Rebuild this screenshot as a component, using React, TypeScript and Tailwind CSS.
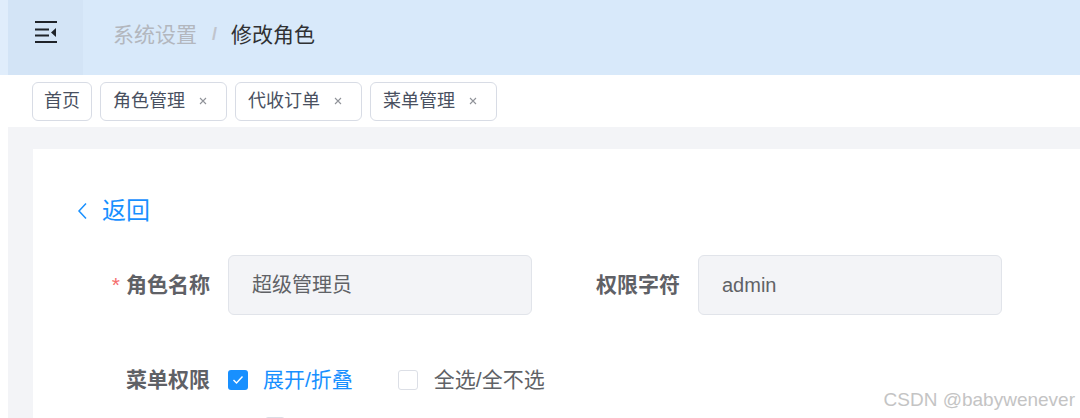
import React from "react";

const Close = () => (
  <svg width="8" height="8" viewBox="0 0 8 8" className="ml-[14px] shrink-0">
    <path d="M1 1L7 7M7 1L1 7" stroke="#909399" strokeWidth="1.1" />
  </svg>
);

const Tag = ({ label, closable = true }: { label: string; closable?: boolean }) => (
  <div
    className={`h-[39px] flex items-center border border-[#d8dce5] rounded-[6px] bg-white text-[18px] text-[#495060] ${
      closable ? "pl-[12px] pr-[19px]" : "px-[11px]"
    }`}
  >
    <span className="leading-none">{label}</span>
    {closable && <Close />}
  </div>
);

const Checkbox = ({ checked }: { checked?: boolean }) =>
  checked ? (
    <div className="w-[20px] h-[20px] rounded-[3px] bg-[#1890ff] flex items-center justify-center shrink-0">
      <svg width="12" height="10" viewBox="0 0 12 10">
        <path d="M1.5 5L4.5 8L10.5 1.5" stroke="white" strokeWidth="1.4" fill="none" />
      </svg>
    </div>
  ) : (
    <div className="w-[20px] h-[20px] rounded-[3px] bg-white border border-[#dcdfe6] shrink-0" />
  );

export default function App() {
  return (
    <div className="w-[1080px] h-[418px] overflow-hidden flex relative bg-white font-['Liberation_Sans','Noto_Sans_CJK_SC',sans-serif]">
      {/* left strip */}
      <div className="w-[8px] flex flex-col shrink-0">
        <div className="h-[75px] bg-[#e0edfb]" />
        <div className="flex-1 bg-white" />
      </div>

      <div className="flex-1 flex flex-col min-w-0">
        {/* header */}
        <div className="h-[75px] bg-[#d8e9fa] flex shrink-0">
          <div className="w-[75px] h-full bg-[#d3e4f6] flex justify-center pt-[20px]">
            <svg width="24" height="24" viewBox="0 0 24 24" className="ml-[1px]">
              <rect x="1" y="1" width="22" height="2" fill="#1f2329" />
              <rect x="1" y="8.5" width="14" height="2" fill="#1f2329" />
              <rect x="1" y="14.5" width="14" height="2" fill="#1f2329" />
              <path d="M22 8L17 12.5L22 17Z" fill="#1f2329" />
              <rect x="1" y="21" width="22" height="2" fill="#1f2329" />
            </svg>
          </div>
          <div className="flex items-center h-[69px] ml-[30px] text-[21px]">
            <span className="text-[#b3b7be]">系统设置</span>
            <span className="ml-[15px] mr-[14px] text-[#c0c4cc] font-bold text-[18px]">/</span>
            <span className="text-[#303133]">修改角色</span>
          </div>
        </div>

        {/* tags bar */}
        <div className="h-[52px] bg-white flex items-center pl-[24px] gap-[8px] shrink-0">
          <Tag label="首页" closable={false} />
          <Tag label="角色管理" />
          <Tag label="代收订单" />
          <Tag label="菜单管理" />
        </div>

        {/* content */}
        <div className="flex-1 bg-[#f3f4f7] pl-[25px] pt-[22px] flex min-h-0">
          <div className="flex-1 bg-white flex flex-col pt-[50px]">
            {/* back */}
            <div className="h-[32px] flex items-center pl-[44px] text-[#1890ff]">
              <svg width="11" height="18" viewBox="0 0 11 18">
                <path d="M9 1.5L2 9L9 16.5" stroke="#1890ff" strokeWidth="1.5" fill="none" />
              </svg>
              <span className="ml-[14px] text-[24px] leading-none">返回</span>
            </div>

            {/* row 1 */}
            <div className="flex items-center mt-[32px] h-[60px]">
              <div className="w-[195px] pr-[18px] text-right text-[21px] font-bold text-[#5f6166]">
                <span className="text-[#f56c6c] font-normal mr-[6px]">*</span>
                角色名称
              </div>
              <div className="w-[304px] h-[60px] rounded-[6px] border border-[#e1e4ea] bg-[#f3f4f7] flex items-center pl-[23px] text-[20px] text-[#606266]">
                超级管理员
              </div>
              <div className="w-[166px] pr-[18px] text-right text-[21px] font-bold text-[#5f6166]">
                权限字符
              </div>
              <div className="w-[304px] h-[60px] rounded-[6px] border border-[#e1e4ea] bg-[#f3f4f7] flex items-center pl-[23px] text-[20px] text-[#606266]">
                admin
              </div>
            </div>

            {/* row 3 */}
            <div className="flex items-center mt-[49px] h-[40px]">
              <div className="w-[195px] pr-[18px] text-right text-[21px] font-bold text-[#5f6166]">
                菜单权限
              </div>
              <Checkbox checked />
              <span className="ml-[15px] text-[21px] text-[#1890ff]">展开/折叠</span>
              <div className="ml-[45px]">
                <Checkbox />
              </div>
              <span className="ml-[16px] text-[21px] text-[#606266]">全选/全不选</span>
            </div>

            {/* row 4 (cut off) */}
            <div className="flex mt-[21px] pl-[232px]">
              <Checkbox />
            </div>
          </div>
        </div>
      </div>

      {/* watermark */}
      <div className="absolute right-[5px] top-[389px] text-[19px] text-[#c4c4c4] leading-[22px] pointer-events-none">
        CSDN @babywenever
      </div>
    </div>
  );
}
